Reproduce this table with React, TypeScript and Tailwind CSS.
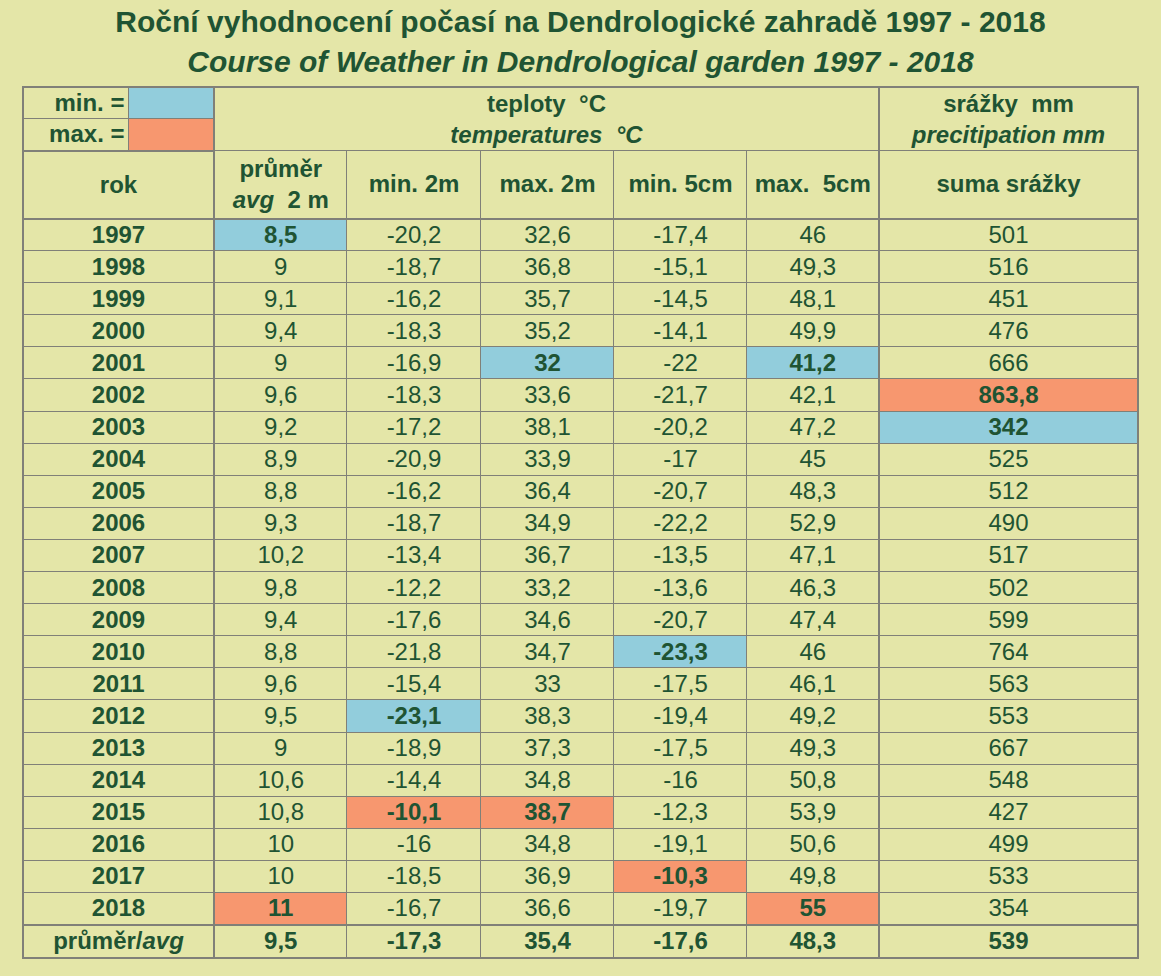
import React from "react";

type Hl = "b" | "o" | undefined;
type Row = { y: string; v: string[]; h?: Record<number, Hl> };

const rows: Row[] = [
  { y: "1997", v: ["8,5", "-20,2", "32,6", "-17,4", "46", "501"], h: { 0: "b" } },
  { y: "1998", v: ["9", "-18,7", "36,8", "-15,1", "49,3", "516"] },
  { y: "1999", v: ["9,1", "-16,2", "35,7", "-14,5", "48,1", "451"] },
  { y: "2000", v: ["9,4", "-18,3", "35,2", "-14,1", "49,9", "476"] },
  { y: "2001", v: ["9", "-16,9", "32", "-22", "41,2", "666"], h: { 2: "b", 4: "b" } },
  { y: "2002", v: ["9,6", "-18,3", "33,6", "-21,7", "42,1", "863,8"], h: { 5: "o" } },
  { y: "2003", v: ["9,2", "-17,2", "38,1", "-20,2", "47,2", "342"], h: { 5: "b" } },
  { y: "2004", v: ["8,9", "-20,9", "33,9", "-17", "45", "525"] },
  { y: "2005", v: ["8,8", "-16,2", "36,4", "-20,7", "48,3", "512"] },
  { y: "2006", v: ["9,3", "-18,7", "34,9", "-22,2", "52,9", "490"] },
  { y: "2007", v: ["10,2", "-13,4", "36,7", "-13,5", "47,1", "517"] },
  { y: "2008", v: ["9,8", "-12,2", "33,2", "-13,6", "46,3", "502"] },
  { y: "2009", v: ["9,4", "-17,6", "34,6", "-20,7", "47,4", "599"] },
  { y: "2010", v: ["8,8", "-21,8", "34,7", "-23,3", "46", "764"], h: { 3: "b" } },
  { y: "2011", v: ["9,6", "-15,4", "33", "-17,5", "46,1", "563"] },
  { y: "2012", v: ["9,5", "-23,1", "38,3", "-19,4", "49,2", "553"], h: { 1: "b" } },
  { y: "2013", v: ["9", "-18,9", "37,3", "-17,5", "49,3", "667"] },
  { y: "2014", v: ["10,6", "-14,4", "34,8", "-16", "50,8", "548"] },
  { y: "2015", v: ["10,8", "-10,1", "38,7", "-12,3", "53,9", "427"], h: { 1: "o", 2: "o" } },
  { y: "2016", v: ["10", "-16", "34,8", "-19,1", "50,6", "499"] },
  { y: "2017", v: ["10", "-18,5", "36,9", "-10,3", "49,8", "533"], h: { 3: "o" } },
  { y: "2018", v: ["11", "-16,7", "36,6", "-19,7", "55", "354"], h: { 0: "o", 4: "o" } },
];

const avg = ["9,5", "-17,3", "35,4", "-17,6", "48,3", "539"];

export default function App() {
  return (
    <div
      className="min-h-screen w-full bg-[#e4e6a8] text-[#1f5433] pt-[3px]"
      style={{ fontFamily: '"Liberation Sans", Arial, sans-serif' }}
    >
      <h1 className="text-center font-bold text-[30px] leading-[38px]">
        Roční vyhodnocení počasí na Dendrologické zahradě 1997 - 2018
      </h1>
      <h2 className="text-center font-bold italic text-[30px] leading-[42px]">
        Course of Weather in Dendrological garden 1997 - 2018
      </h2>
      <table className="mx-auto mt-[3px] w-[1115px] table-fixed border-collapse border-2 border-[#808078] text-[24px]">
        <colgroup>
          <col className="w-[106px]" />
          <col className="w-[85px]" />
          <col className="w-[133px]" />
          <col className="w-[134px]" />
          <col className="w-[133px]" />
          <col className="w-[133px]" />
          <col className="w-[132px]" />
          <col className="w-[259px]" />
        </colgroup>
        <tbody>
          <tr className="h-[31px]">
            <td className="border border-[#808078] text-right font-bold pr-[4px] leading-[28px]">min. =</td>
            <td className="border border-[#808078] border-r-2 bg-[#92cddc]"></td>
            <td
              colSpan={5}
              rowSpan={2}
              className="border border-[#808078] border-r-2 border-b text-center font-bold leading-[31px] whitespace-pre"
            >
              <div>teploty  °C</div>
              <div className="italic">temperatures  °C</div>
            </td>
            <td
              rowSpan={2}
              className="border border-[#808078] text-center font-bold leading-[31px] whitespace-pre"
            >
              <div>srážky  mm</div>
              <div className="italic">precitipation mm</div>
            </td>
          </tr>
          <tr className="h-[31px]">
            <td className="border border-[#808078] border-b-2 text-right font-bold pr-[4px] leading-[28px]">max. =</td>
            <td className="border border-[#808078] border-r-2 border-b-2 bg-[#f7976f]"></td>
          </tr>
          <tr className="h-[68px]">
            <td colSpan={2} className="border border-[#808078] border-r-2 border-b-2 text-center font-bold">
              rok
            </td>
            <td className="border border-[#808078] border-b-2 text-center font-bold leading-[31px]">
              <div>průměr</div>
              <div className="whitespace-pre">
                <span className="italic">avg</span>  2 m
              </div>
            </td>
            <td className="border border-[#808078] border-b-2 text-center font-bold">min. 2m</td>
            <td className="border border-[#808078] border-b-2 text-center font-bold">max. 2m</td>
            <td className="border border-[#808078] border-b-2 text-center font-bold">min. 5cm</td>
            <td className="border border-[#808078] border-b-2 border-r-2 text-center font-bold whitespace-pre">max.  5cm</td>
            <td className="border border-[#808078] border-b-2 text-center font-bold">suma srážky</td>
          </tr>
          {rows.map((r, ri) => {
            const last = ri === rows.length - 1;
            return (
              <tr key={r.y} className="h-[32.1px]">
                <td
                  colSpan={2}
                  className={
                    "border border-[#808078] border-r-2 text-center font-bold leading-[30px] " +
                    (last ? "border-b-2" : "")
                  }
                >
                  {r.y}
                </td>
                {r.v.map((val, i) => {
                  const h = r.h ? r.h[i] : undefined;
                  const bg = h === "b" ? "bg-[#92cddc] font-bold" : h === "o" ? "bg-[#f7976f] font-bold" : "";
                  return (
                    <td
                      key={i}
                      className={
                        "border border-[#808078] text-center leading-[30px] " +
                        bg +
                        (i === 4 ? " border-r-2" : "") +
                        (last ? " border-b-2" : "")
                      }
                    >
                      {val}
                    </td>
                  );
                })}
              </tr>
            );
          })}
          <tr className="h-[33px]">
            <td colSpan={2} className="border border-[#808078] border-r-2 text-center font-bold leading-[30px]">
              průměr/<span className="italic">avg</span>
            </td>
            {avg.map((val, i) => (
              <td
                key={i}
                className={
                  "border border-[#808078] text-center font-bold leading-[30px]" + (i === 4 ? " border-r-2" : "")
                }
              >
                {val}
              </td>
            ))}
          </tr>
        </tbody>
      </table>
    </div>
  );
}
